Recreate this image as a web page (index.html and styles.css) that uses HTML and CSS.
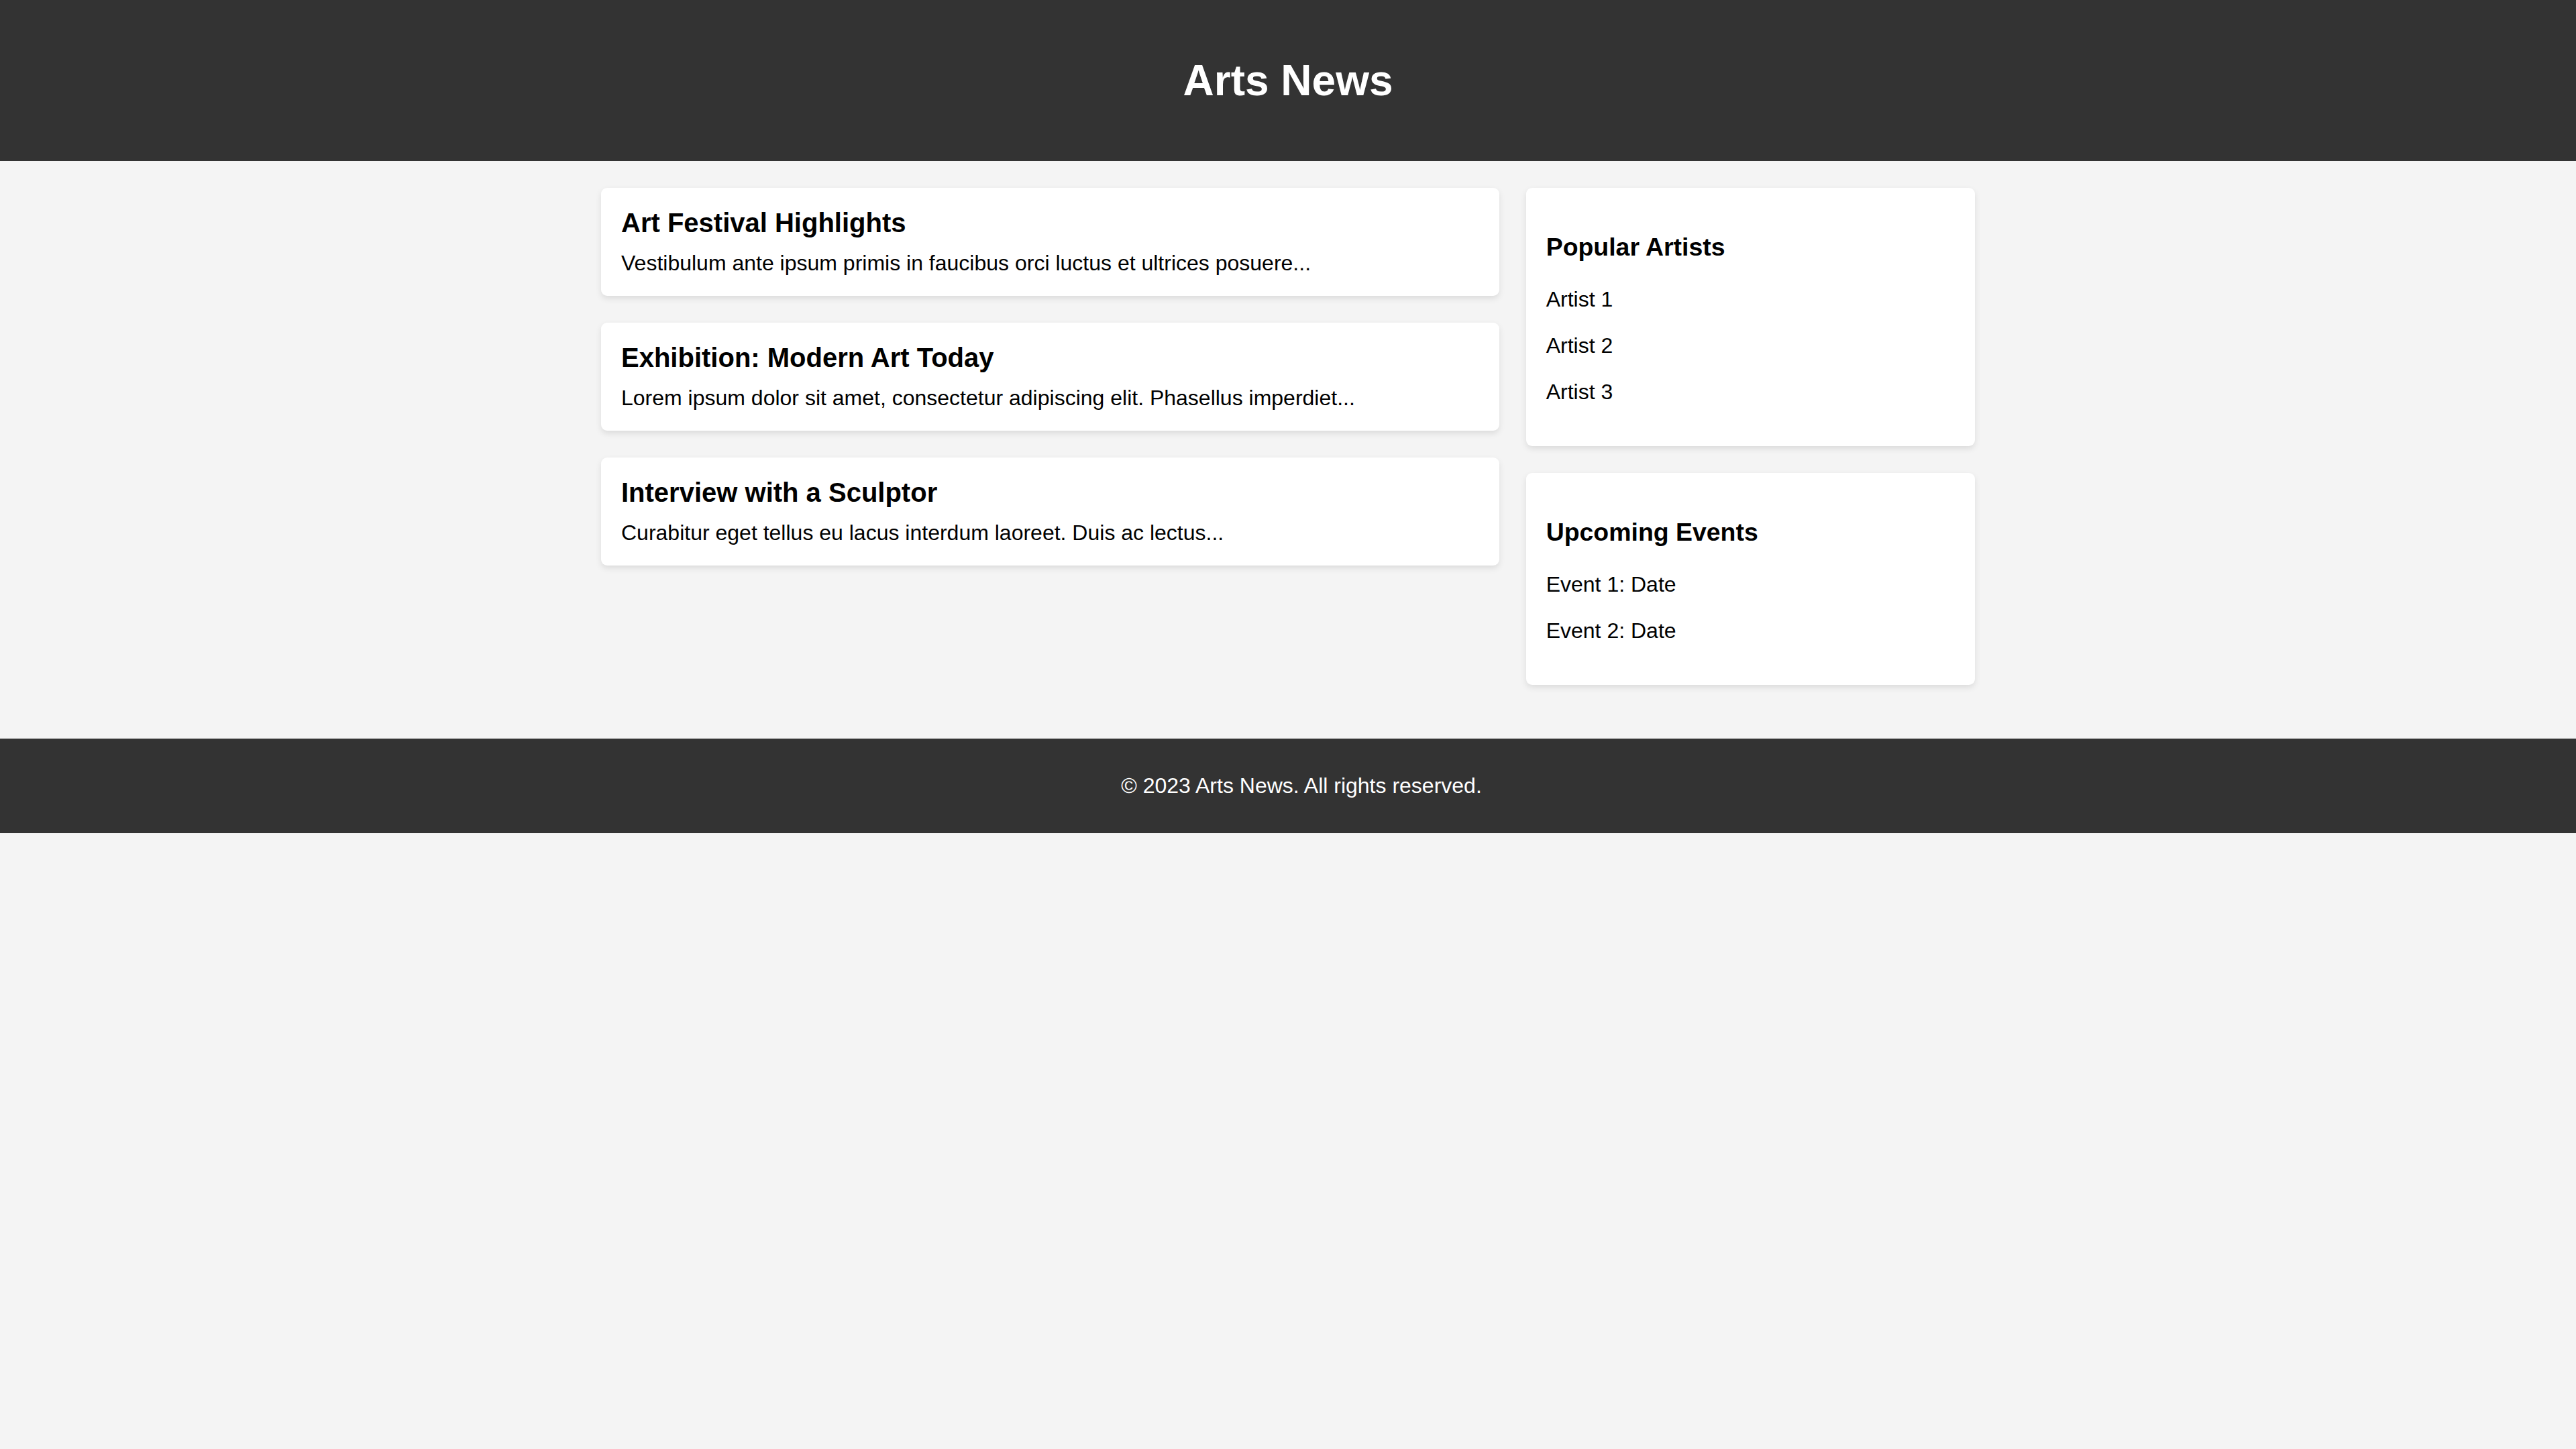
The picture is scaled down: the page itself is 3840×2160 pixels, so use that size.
FILE: index.html
```html
<!DOCTYPE html>
<html lang="en">
<head>
<meta charset="utf-8">
<title>Arts News</title>
<link rel="stylesheet" href="styles.css">
</head>
<body>
<header class="site-header">
  <h1 class="site-title">Arts News</h1>
</header>
<div class="container">
  <main class="articles">
    <article class="card article">
      <h2 class="article-title">Art Festival Highlights</h2>
      <p class="article-text">Vestibulum ante ipsum primis in faucibus orci luctus et ultrices posuere...</p>
    </article>
    <article class="card article">
      <h2 class="article-title">Exhibition: Modern Art Today</h2>
      <p class="article-text">Lorem ipsum dolor sit amet, consectetur adipiscing elit. Phasellus imperdiet...</p>
    </article>
    <article class="card article">
      <h2 class="article-title">Interview with a Sculptor</h2>
      <p class="article-text">Curabitur eget tellus eu lacus interdum laoreet. Duis ac lectus...</p>
    </article>
  </main>
  <aside class="sidebar">
    <section class="card widget">
      <h3 class="widget-title">Popular Artists</h3>
      <p class="widget-item">Artist 1</p>
      <p class="widget-item">Artist 2</p>
      <p class="widget-item">Artist 3</p>
    </section>
    <section class="card widget">
      <h3 class="widget-title">Upcoming Events</h3>
      <p class="widget-item">Event 1: Date</p>
      <p class="widget-item">Event 2: Date</p>
    </section>
  </aside>
</div>
<footer class="site-footer">
  <p class="footer-text">&copy; 2023 Arts News. All rights reserved.</p>
</footer>
</body>
</html>
```

FILE: styles.css
```css
html, body {
  margin: 0;
  padding: 0;
}

body {
  background: #f4f4f4;
  color: #000;
  font-family: "Liberation Sans", Arial, Helvetica, sans-serif;
  font-size: 32px;
  line-height: normal;
}

.site-header {
  background: #333;
  color: #fff;
  text-align: center;
  padding: 40px 0;
}

.site-title {
  font-size: 64px;
  font-weight: bold;
  margin: 42.88px 0;
}

.container {
  width: 2048px;
  margin: 0 auto;
  padding: 40px 0;
  display: flex;
  gap: 40px;
  align-items: flex-start;
}

.articles {
  flex: 2;
  min-width: 0;
}

.sidebar {
  flex: 1;
  min-width: 0;
}

.card {
  background: #fff;
  padding: 30px;
  margin-bottom: 40px;
  border-radius: 9px;
  box-shadow: 0 4px 10px rgba(0, 0, 0, 0.1);
}

.article-title {
  font-size: 40px;
  font-weight: bold;
  margin: 0 0 19px;
}

.article-text {
  font-size: 32px;
  margin: 0;
}

.widget-title {
  font-size: 37.44px;
  font-weight: bold;
  margin: 37.44px 0;
}

.widget-item {
  font-size: 32px;
  margin: 32px 0;
}

.site-footer {
  background: #333;
  color: #fff;
  text-align: center;
  padding: 20px 0 20px 40px;
}

.footer-text {
  font-size: 32px;
  margin: 32px 0;
}
```
